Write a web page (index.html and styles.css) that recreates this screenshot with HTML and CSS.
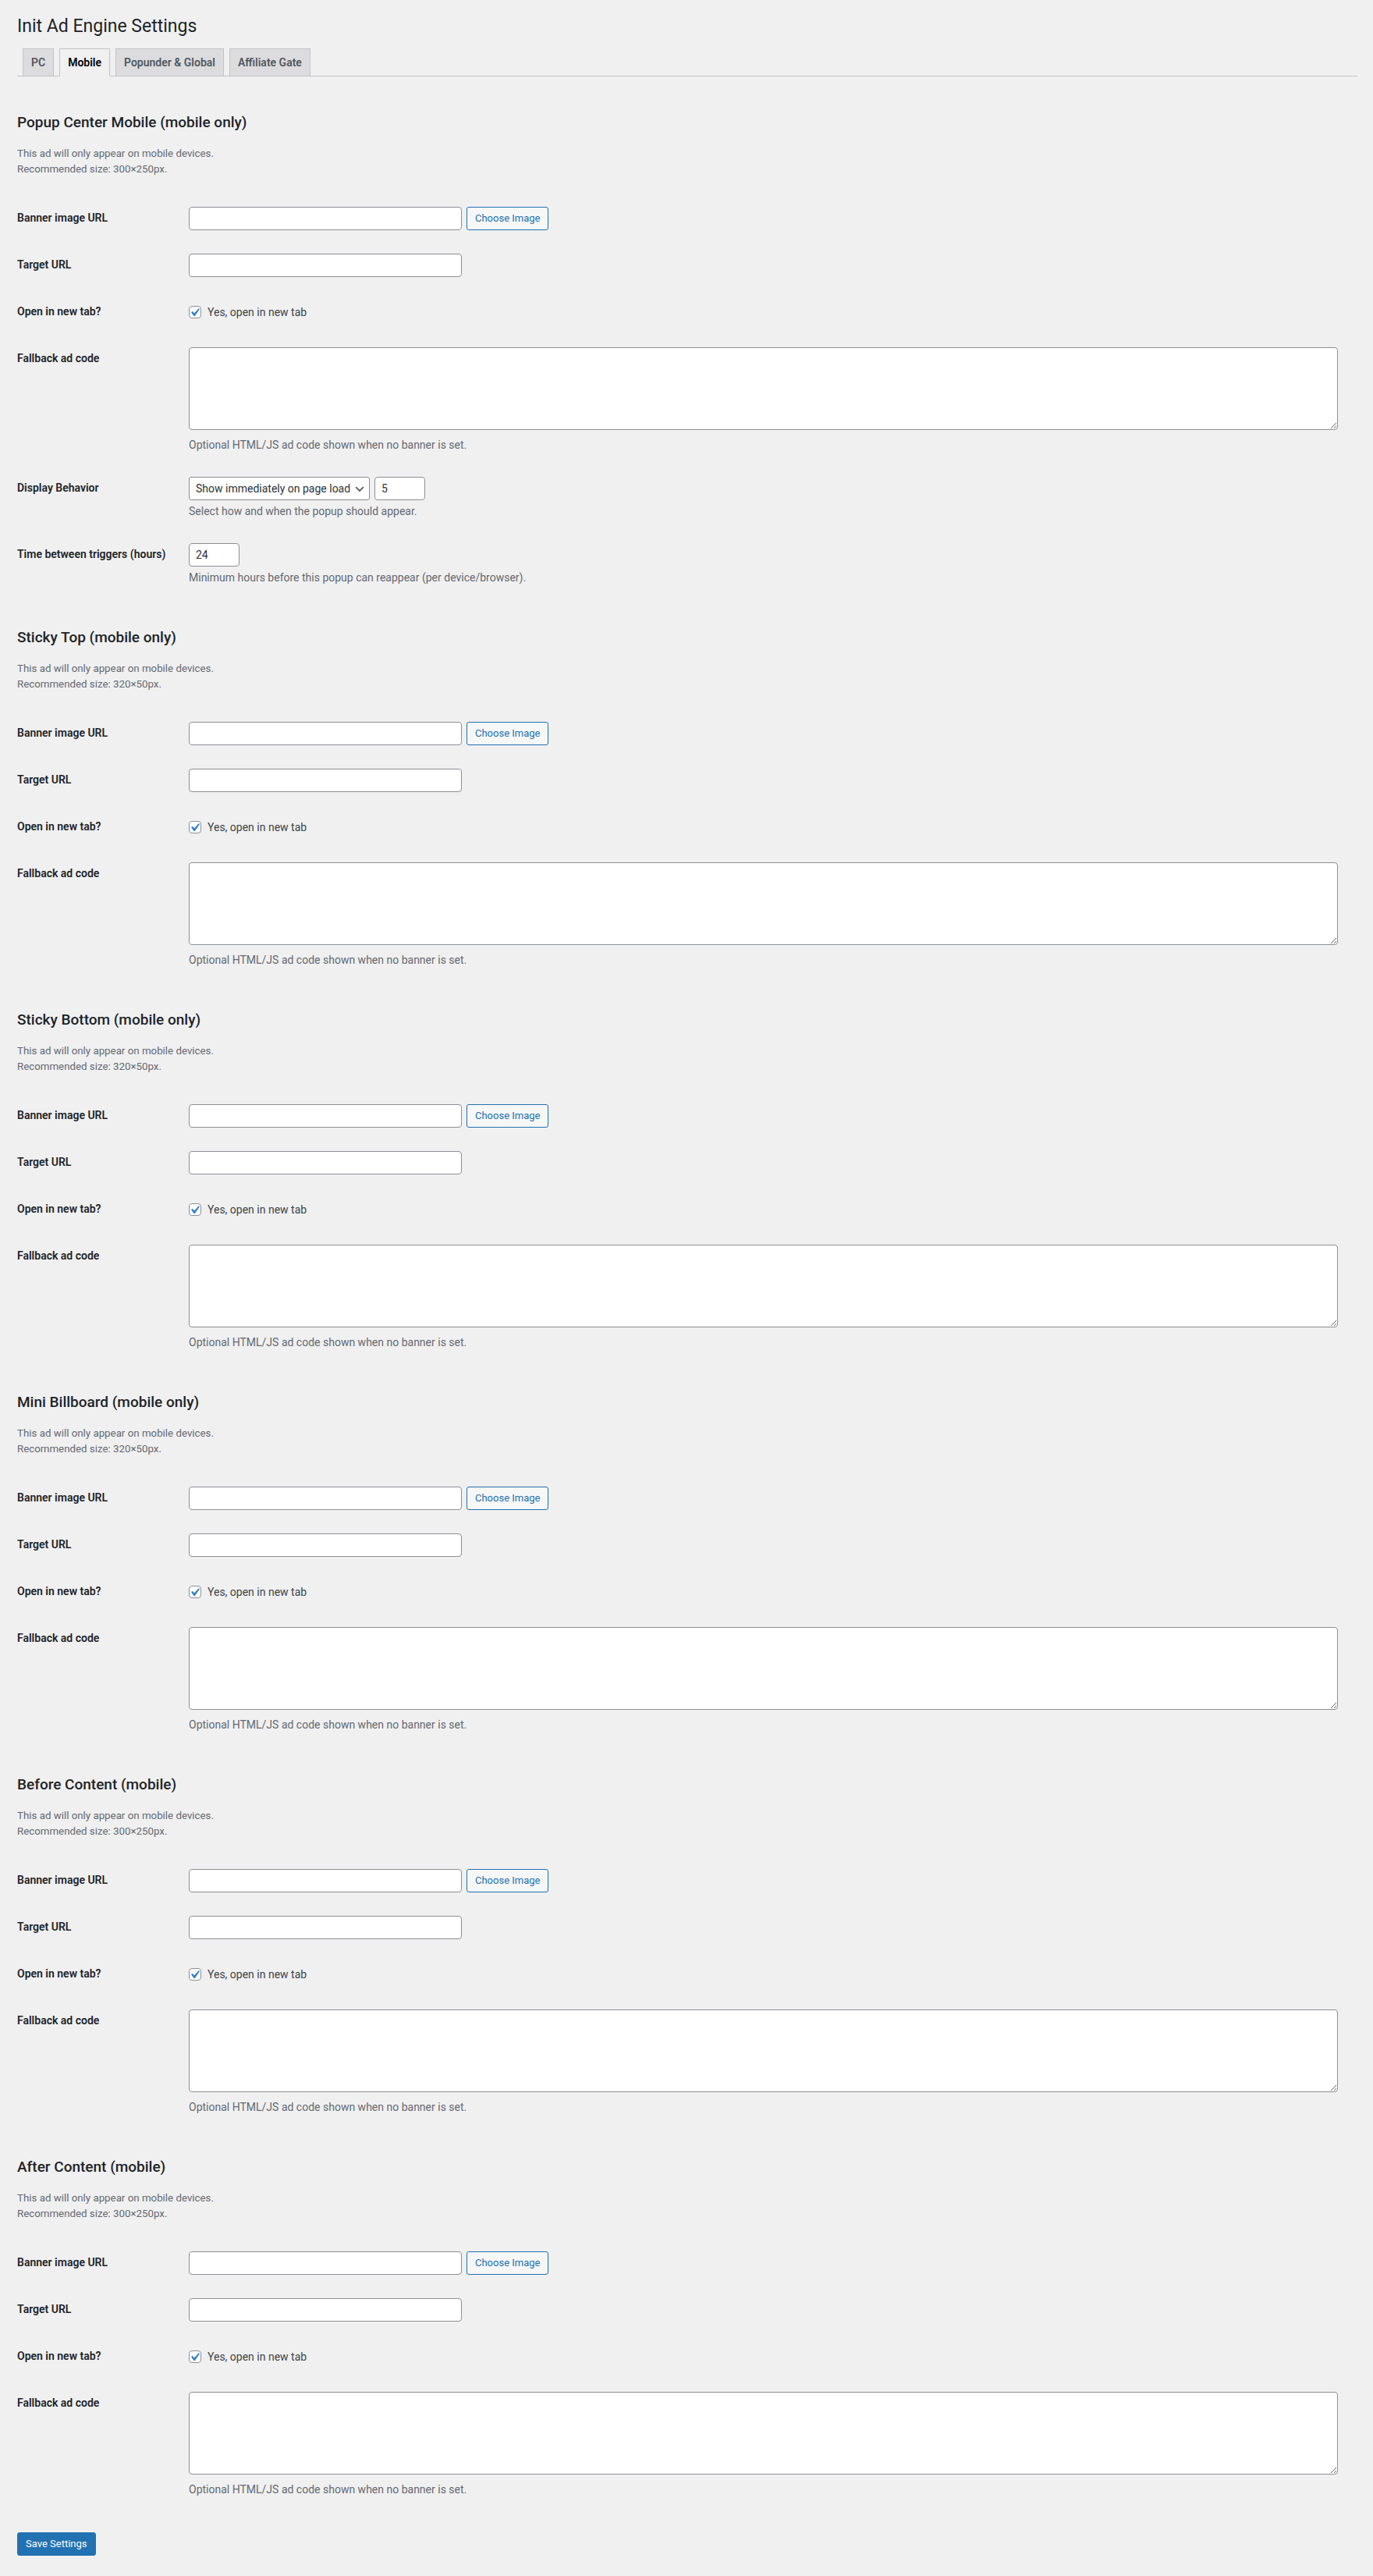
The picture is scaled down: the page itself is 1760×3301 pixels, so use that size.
FILE: index.html
```html
<!DOCTYPE html>
<html lang="en">
<head>
<meta charset="utf-8">
<title>Init Ad Engine Settings</title>
<link rel="stylesheet" href="styles.css">
</head>
<body>
<div class="wrap">
  <h1 class="page-title">Init Ad Engine Settings</h1>
  <nav class="nav-tab-wrapper">
    <a class="nav-tab" href="#">PC</a>
    <a class="nav-tab nav-tab-active" href="#">Mobile</a>
    <a class="nav-tab" href="#">Popunder &amp; Global</a>
    <a class="nav-tab" href="#">Affiliate Gate</a>
  </nav>

  <form class="settings-form">

    <section class="ad-section">
      <h2>Popup Center Mobile (mobile only)</h2>
      <p class="intro">This ad will only appear on mobile devices.<br>Recommended size: 300×250px.</p>
      <table class="form-table">
        <tr>
          <th>Banner image URL</th>
          <td><div class="inline-field"><input type="text" class="regular-text"><button type="button" class="button">Choose Image</button></div></td>
        </tr>
        <tr>
          <th>Target URL</th>
          <td><input type="text" class="regular-text"></td>
        </tr>
        <tr>
          <th>Open in new tab?</th>
          <td><label class="check-label"><span class="checkbox"><svg viewBox="3.81 2.857 13.33 13.33" width="14" height="14"><path d="M14.83 4.89l1.34.94-5.81 8.38H9.02L5.78 9.67l1.34-1.25 2.57 2.4z"/></svg></span>Yes, open in new tab</label></td>
        </tr>
        <tr>
          <th>Fallback ad code</th>
          <td><textarea class="large-text" rows="5"></textarea><p class="field-desc">Optional HTML/JS ad code shown when no banner is set.</p></td>
        </tr>
        <tr>
          <th>Display Behavior</th>
          <td>
            <div class="inline-field">
              <span class="select-wrap"><select class="behavior-select"><option>Show immediately on page load</option></select><svg class="select-chevron" viewBox="0 0 20 20" width="16" height="16"><path d="M5 6l5 5 5-5 2 1-7 7-7-7 2-1z"/></svg></span><input type="number" class="small-text" value="5">
            </div>
            <p class="field-desc">Select how and when the popup should appear.</p>
          </td>
        </tr>
        <tr>
          <th>Time between triggers (hours)</th>
          <td><input type="number" class="small-text" value="24"><p class="field-desc">Minimum hours before this popup can reappear (per device/browser).</p></td>
        </tr>
      </table>
    </section>

    <section class="ad-section">
      <h2>Sticky Top (mobile only)</h2>
      <p class="intro">This ad will only appear on mobile devices.<br>Recommended size: 320×50px.</p>
      <table class="form-table">
        <tr>
          <th>Banner image URL</th>
          <td><div class="inline-field"><input type="text" class="regular-text"><button type="button" class="button">Choose Image</button></div></td>
        </tr>
        <tr>
          <th>Target URL</th>
          <td><input type="text" class="regular-text"></td>
        </tr>
        <tr>
          <th>Open in new tab?</th>
          <td><label class="check-label"><span class="checkbox"><svg viewBox="3.81 2.857 13.33 13.33" width="14" height="14"><path d="M14.83 4.89l1.34.94-5.81 8.38H9.02L5.78 9.67l1.34-1.25 2.57 2.4z"/></svg></span>Yes, open in new tab</label></td>
        </tr>
        <tr>
          <th>Fallback ad code</th>
          <td><textarea class="large-text" rows="5"></textarea><p class="field-desc">Optional HTML/JS ad code shown when no banner is set.</p></td>
        </tr>
      </table>
    </section>

    <section class="ad-section">
      <h2>Sticky Bottom (mobile only)</h2>
      <p class="intro">This ad will only appear on mobile devices.<br>Recommended size: 320×50px.</p>
      <table class="form-table">
        <tr>
          <th>Banner image URL</th>
          <td><div class="inline-field"><input type="text" class="regular-text"><button type="button" class="button">Choose Image</button></div></td>
        </tr>
        <tr>
          <th>Target URL</th>
          <td><input type="text" class="regular-text"></td>
        </tr>
        <tr>
          <th>Open in new tab?</th>
          <td><label class="check-label"><span class="checkbox"><svg viewBox="3.81 2.857 13.33 13.33" width="14" height="14"><path d="M14.83 4.89l1.34.94-5.81 8.38H9.02L5.78 9.67l1.34-1.25 2.57 2.4z"/></svg></span>Yes, open in new tab</label></td>
        </tr>
        <tr>
          <th>Fallback ad code</th>
          <td><textarea class="large-text" rows="5"></textarea><p class="field-desc">Optional HTML/JS ad code shown when no banner is set.</p></td>
        </tr>
      </table>
    </section>

    <section class="ad-section">
      <h2>Mini Billboard (mobile only)</h2>
      <p class="intro">This ad will only appear on mobile devices.<br>Recommended size: 320×50px.</p>
      <table class="form-table">
        <tr>
          <th>Banner image URL</th>
          <td><div class="inline-field"><input type="text" class="regular-text"><button type="button" class="button">Choose Image</button></div></td>
        </tr>
        <tr>
          <th>Target URL</th>
          <td><input type="text" class="regular-text"></td>
        </tr>
        <tr>
          <th>Open in new tab?</th>
          <td><label class="check-label"><span class="checkbox"><svg viewBox="3.81 2.857 13.33 13.33" width="14" height="14"><path d="M14.83 4.89l1.34.94-5.81 8.38H9.02L5.78 9.67l1.34-1.25 2.57 2.4z"/></svg></span>Yes, open in new tab</label></td>
        </tr>
        <tr>
          <th>Fallback ad code</th>
          <td><textarea class="large-text" rows="5"></textarea><p class="field-desc">Optional HTML/JS ad code shown when no banner is set.</p></td>
        </tr>
      </table>
    </section>

    <section class="ad-section">
      <h2>Before Content (mobile)</h2>
      <p class="intro">This ad will only appear on mobile devices.<br>Recommended size: 300×250px.</p>
      <table class="form-table">
        <tr>
          <th>Banner image URL</th>
          <td><div class="inline-field"><input type="text" class="regular-text"><button type="button" class="button">Choose Image</button></div></td>
        </tr>
        <tr>
          <th>Target URL</th>
          <td><input type="text" class="regular-text"></td>
        </tr>
        <tr>
          <th>Open in new tab?</th>
          <td><label class="check-label"><span class="checkbox"><svg viewBox="3.81 2.857 13.33 13.33" width="14" height="14"><path d="M14.83 4.89l1.34.94-5.81 8.38H9.02L5.78 9.67l1.34-1.25 2.57 2.4z"/></svg></span>Yes, open in new tab</label></td>
        </tr>
        <tr>
          <th>Fallback ad code</th>
          <td><textarea class="large-text" rows="5"></textarea><p class="field-desc">Optional HTML/JS ad code shown when no banner is set.</p></td>
        </tr>
      </table>
    </section>

    <section class="ad-section">
      <h2>After Content (mobile)</h2>
      <p class="intro">This ad will only appear on mobile devices.<br>Recommended size: 300×250px.</p>
      <table class="form-table">
        <tr>
          <th>Banner image URL</th>
          <td><div class="inline-field"><input type="text" class="regular-text"><button type="button" class="button">Choose Image</button></div></td>
        </tr>
        <tr>
          <th>Target URL</th>
          <td><input type="text" class="regular-text"></td>
        </tr>
        <tr>
          <th>Open in new tab?</th>
          <td><label class="check-label"><span class="checkbox"><svg viewBox="3.81 2.857 13.33 13.33" width="14" height="14"><path d="M14.83 4.89l1.34.94-5.81 8.38H9.02L5.78 9.67l1.34-1.25 2.57 2.4z"/></svg></span>Yes, open in new tab</label></td>
        </tr>
        <tr>
          <th>Fallback ad code</th>
          <td><textarea class="large-text" rows="5"></textarea><p class="field-desc">Optional HTML/JS ad code shown when no banner is set.</p></td>
        </tr>
      </table>
    </section>

    <p class="submit"><button type="submit" class="button-primary">Save Settings</button></p>
  </form>
</div>
</body>
</html>
```

FILE: styles.css
```css
html,
body {
  margin: 0;
  padding: 0;
  background: #f0f0f1;
}

body {
  color: #3c434a;
  font-family: Roboto, "Noto Sans", "Liberation Sans", sans-serif;
  font-size: 13px;
  line-height: 1.4;
}

.wrap {
  margin: 0 20px 0 22px;
  padding-top: 10px;
}

.page-title {
  margin: 0;
  padding: 9px 0 4px;
  font-size: 23px;
  font-weight: 400;
  line-height: 30px;
  color: #1d2327;
}

/* Tabs */
.nav-tab-wrapper {
  display: flex;
  align-items: flex-end;
  margin: 0;
  padding-top: 9px;
  border-bottom: 1px solid #c3c4c7;
}

.nav-tab {
  margin-left: 7px;
  padding: 5px 10px;
  border: 1px solid #c3c4c7;
  border-bottom: none;
  background: #dcdcde;
  color: #50575e;
  font-size: 14px;
  font-weight: 600;
  line-height: 24px;
  text-decoration: none;
  white-space: nowrap;
}

.nav-tab-active {
  margin-bottom: -1px;
  background: #f0f0f1;
  border-bottom: 1px solid #f0f0f1;
  color: #000;
}

/* Sections */
.settings-form {
  padding-top: 8px;
}

.ad-section {
  margin-top: 39px;
}

.ad-section h2 {
  margin: 0 0 18px;
  font-size: 19px;
  font-weight: 500;
  line-height: 24px;
  color: #1d2327;
}

.intro {
  margin: 0 0 24px;
  font-size: 13.3px;
  line-height: 19.5px;
  color: #646970;
}

/* Form table */
.form-table {
  width: 100%;
  border-collapse: collapse;
  border-spacing: 0;
}

.form-table th {
  width: 200px;
  padding: 20px 10px 20px 0;
  text-align: left;
  vertical-align: top;
  font-size: 14px;
  font-weight: 600;
  line-height: 18.2px;
  color: #1d2327;
}

.form-table td {
  padding: 15px 10px;
  vertical-align: middle;
  font-size: 14px;
  line-height: 1.3;
}

.field-desc {
  margin: 4px 0 0;
  font-size: 14px;
  line-height: 21px;
  color: #646970;
}

.inline-field {
  display: flex;
  align-items: center;
  gap: 6px;
}

/* Inputs */
.regular-text,
.small-text,
.behavior-select,
.large-text {
  box-sizing: border-box;
  margin: 0;
  border: 1px solid #8c8f94;
  background: #fff;
  color: #2c3338;
  font-family: inherit;
  font-size: 14px;
}

.regular-text {
  display: block;
  width: 350px;
  height: 30px;
  padding: 0 8px;
  border-radius: 4px;
  line-height: 28px;
}

.small-text {
  display: block;
  width: 65px;
  height: 30px;
  padding: 0 0 0 8px;
  border-radius: 4px;
  line-height: 28px;
  appearance: textfield;
  -moz-appearance: textfield;
}

.small-text::-webkit-inner-spin-button,
.small-text::-webkit-outer-spin-button {
  -webkit-appearance: none;
  margin: 0;
}

.large-text {
  display: block;
  width: 99%;
  height: 106px;
  margin-bottom: 9px;
  padding: 2px 6px;
  border-radius: 4px;
  line-height: 20px;
}

.large-text + .field-desc {
  margin-top: 0;
}

.select-wrap {
  position: relative;
  display: inline-flex;
}

.behavior-select {
  width: 232px;
  height: 30px;
  padding: 0 24px 0 8px;
  border-radius: 3px;
  line-height: 28px;
  appearance: none;
  -webkit-appearance: none;
}

.select-chevron {
  position: absolute;
  top: 8px;
  right: 5px;
  fill: #555;
  pointer-events: none;
}

/* Checkbox */
.check-label {
  display: flex;
  align-items: center;
  gap: 8px;
  height: 30px;
  color: #3c434a;
  font-size: 14px;
}

.checkbox {
  display: inline-flex;
  box-sizing: border-box;
  width: 16px;
  height: 16px;
  border: 1px solid #8c8f94;
  border-radius: 4px;
  background: #fff;
}

.checkbox svg {
  display: block;
  overflow: visible;
  fill: #3582c4;
}

/* Buttons */
.button {
  box-sizing: border-box;
  height: 30px;
  margin: 0;
  padding: 0 10px;
  border: 1px solid #2271b1;
  border-radius: 3px;
  background: #f6f7f7;
  color: #2271b1;
  font-family: inherit;
  font-size: 13px;
  line-height: 28px;
  white-space: nowrap;
}

.submit {
  display: flex;
  margin: 0;
  padding: 29px 0 26px;
}

.button-primary {
  box-sizing: border-box;
  height: 30px;
  margin: 0;
  padding: 0 10px;
  border: 1px solid #2271b1;
  border-radius: 3px;
  background: #2271b1;
  color: #fff;
  font-family: inherit;
  font-size: 13px;
  line-height: 28px;
}
```
